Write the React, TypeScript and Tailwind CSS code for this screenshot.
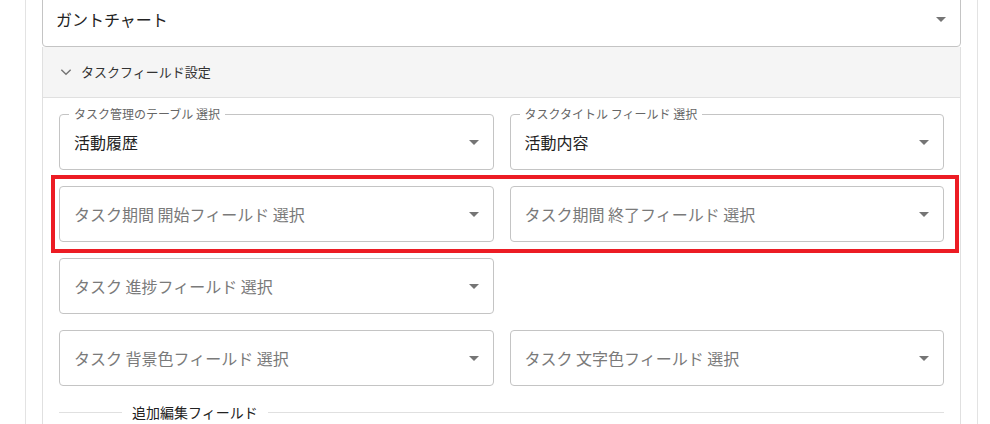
import type { ReactNode } from 'react'

const FONT = { fontFamily: '"Noto Sans CJK JP", "Noto Sans", "Liberation Sans", sans-serif' }

function DropArrow() {
  return (
    <svg viewBox="0 0 24 24" className="h-6 w-6 shrink-0 fill-[#757575]">
      <path d="M7 10l5 5 5-5z" />
    </svg>
  )
}

function SelectBox({ label, value, placeholder }: { label?: string; value?: string; placeholder?: string }) {
  return (
    <div className="relative flex h-14 items-center rounded border border-[#c4c4c4] pl-[14px] pr-[7px]">
      {label && (
        <span className="absolute -top-[9px] left-[9px] bg-white px-[5px] text-[12px] leading-4 text-[#666]">
          {label}
        </span>
      )}
      <span className={`flex-1 text-[16px] leading-6 ${value ? 'text-[#222]' : 'text-[#7a7a7a]'}`}>
        {value ?? placeholder}
      </span>
      <DropArrow />
    </div>
  )
}

function Row({ children }: { children: ReactNode }) {
  return <div className="grid grid-cols-2 gap-4">{children}</div>
}

export default function App() {
  return (
    <div className="relative h-[424px] w-[990px] overflow-hidden bg-white" style={FONT}>
      <div className="ml-[25px] flex h-full w-[953px] flex-col border-x border-[#e3e3e3] px-4">
        {/* top select */}
        <div className="-mt-[9px] flex h-14 shrink-0 items-center rounded border border-[#c4c4c4] pl-[13px] pr-[7px]">
          <span className="flex-1 text-[16px] leading-6 text-[#222]">ガントチャート</span>
          <DropArrow />
        </div>

        {/* accordion */}
        <div className="flex flex-1 flex-col border-x border-[#e0e0e0]">
          <div className="flex h-[51px] shrink-0 items-center gap-[8px] border-b border-[#e0e0e0] bg-[#f5f5f5] pl-[16px]">
            <svg viewBox="0 0 24 24" className="h-[14px] w-[14px] fill-none stroke-[#757575] stroke-[2.4]">
              <path d="M4 8l8 8 8-8" />
            </svg>
            <span className="text-[13px] leading-5 text-[#333]">タスクフィールド設定</span>
          </div>

          <div className="flex flex-col gap-4 px-4 pt-4">
            <Row>
              <SelectBox label="タスク管理のテーブル 選択" value="活動履歴" />
              <SelectBox label="タスクタイトル フィールド 選択" value="活動内容" />
            </Row>
            <Row>
              <SelectBox placeholder="タスク期間 開始フィールド 選択" />
              <SelectBox placeholder="タスク期間 終了フィールド 選択" />
            </Row>
            <Row>
              <SelectBox placeholder="タスク 進捗フィールド 選択" />
              <div />
            </Row>
            <Row>
              <SelectBox placeholder="タスク 背景色フィールド 選択" />
              <SelectBox placeholder="タスク 文字色フィールド 選択" />
            </Row>
            <div className="flex items-center">
              <div className="h-px w-[63px] bg-[#e0e0e0]" />
              <span className="px-[10px] text-[14px] leading-5 text-[#222]">追加編集フィールド</span>
              <div className="h-px flex-1 bg-[#e0e0e0]" />
            </div>
          </div>
        </div>
      </div>

      {/* annotation highlight */}
      <div className="pointer-events-none absolute left-[51px] top-[175px] h-[78px] w-[908px] border-4 border-[#ec1c24]" />
    </div>
  )
}
